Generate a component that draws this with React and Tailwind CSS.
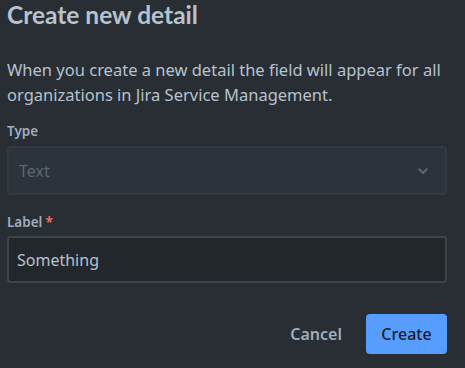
import React, { useState } from 'react'

const CreateDetail = () => {
  const [label, setLabel] = useState('Something')

  return (
    <div className="w-[465px] h-[368px] bg-[#282e33] text-[#b6c2cf] px-[7px] flex flex-col" style={{ fontFamily: '"Noto Sans", "Open Sans", sans-serif' }}>
      <h1 className="text-[24.5px] leading-[28px] font-bold text-[#b6c2cf] mt-[1px]" style={{ fontFamily: 'Lato, "Noto Sans", sans-serif' }}>Create new detail</h1>

      <p className="text-[16.5px] leading-[25px] mt-[28px] text-[#b6c2cf]">
        When you create a new detail the field will appear for all organizations in Jira Service Management.
      </p>

      {/* Type */}
      <div className="mt-[15px]">
        <label className="block text-[13.5px] leading-[18px] font-semibold text-[#9fadbc]">Type</label>
        <div className="mt-[6px] h-[49px] w-[440px] rounded-[3px] border-2 border-[#323940] bg-[#2c333a] flex items-center justify-between pl-[10px] pr-[14px]">
          <span className="text-[16px] text-[#596773]">Text</span>
          {/* chevron */}
          <svg width="16" height="16" viewBox="0 0 24 24" className="text-[#596773]">
            <path d="M6.5 9.5l5.5 5.5 5.5-5.5" fill="none" stroke="currentColor" strokeWidth="3.2" strokeLinecap="round" strokeLinejoin="round" />
          </svg>
        </div>
      </div>

      {/* Label */}
      <div className="mt-[18px]">
        <label className="block text-[13.5px] leading-[18px] font-semibold text-[#9fadbc]">
          Label<span className="text-[#f87462] ml-[3px]">*</span>
        </label>
        <input
          value={label}
          onChange={({ target }) => setLabel(target.value)}
          className="mt-[5px] h-[47px] w-[440px] rounded-[3px] border-2 border-[#3b434b] bg-[#22272b] px-[8px] text-[16px] text-[#b6c2cf] outline-none"
        />
      </div>

      <div className="flex justify-end items-center gap-[4px] mt-[31px] pr-[11px]">
        <button className="h-[40px] px-[20px] rounded-[3px] text-[16px] font-semibold text-[#9fadbc]">Cancel</button>
        <button className="h-[40px] w-[81px] rounded-[4px] bg-[#579dff] text-[16px] font-medium text-[#1d2125]">Create</button>
      </div>
    </div>
  )
}

export default function App() {
  return <CreateDetail />
}
